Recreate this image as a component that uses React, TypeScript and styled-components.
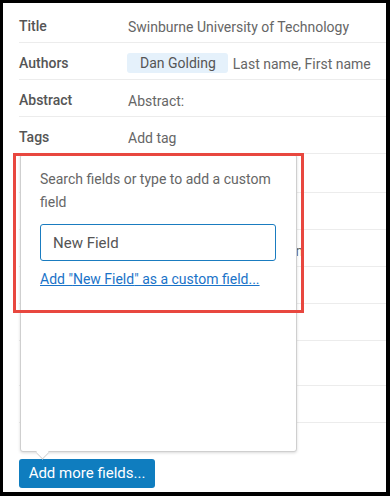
import React, { useState } from "react";
import styled, { createGlobalStyle } from "styled-components";

type Field = {
  label: string;
  value: string;
  chip?: string;
  height?: number;
};

// rows under the popover are left mostly blank, only the edge of one value peeks out
const fields: Field[] = [
  { label: "Title", value: "Swinburne University of Technology" },
  { label: "Authors", value: "Last name, First name", chip: "Dan Golding" },
  { label: "Abstract", value: "Abstract:" },
  { label: "Tags", value: "Add tag" },
  { label: "", value: "", height: 39 },
  { label: "", value: "" },
  { label: "", value: "Faculties of Communication" },
  { label: "", value: "" },
  { label: "", value: "" },
  { label: "", value: "", height: 45 },
  { label: "", value: "" },
];

function App() {
  const [query, setQuery] = useState<string>("New Field");

  return (
    <StFrame>
      <GlobalStyle />
      <StFieldList>
        {fields.map((field, index) => {
          return (
            <StRow key={index} $height={field.height ?? 37}>
              <StLabel>{field.label}</StLabel>
              <StValue>
                {field.chip && <StChip>{field.chip}</StChip>}
                {field.value}
              </StValue>
            </StRow>
          );
        })}
      </StFieldList>
      <StFooter>
        <StPopover>
          <StHint>Search fields or type to add a custom field</StHint>
          <StSearchInput
            value={query}
            onChange={(event) => setQuery(event.target.value)}
          />
          <StCustomLink href="#">Add "{query}" as a custom field...</StCustomLink>
        </StPopover>
        <StAddButton type="button">Add more fields...</StAddButton>
      </StFooter>
      <StHighlight />
    </StFrame>
  );
}

export default App;

const GlobalStyle = createGlobalStyle`
  body {
    margin: 0;
    background: #000;
    font-family: Roboto, "Liberation Sans", sans-serif;
  }
`;

const StFrame = styled.div`
  position: relative;
  box-sizing: border-box;
  width: 390px;
  height: 496px;
  border-style: solid;
  border-color: #000;
  border-width: 3px 4px 4px 3px;
  background: #fff;
  padding: 3px 0 0 16px;
  overflow: hidden;
`;

const StFieldList = styled.div`
  display: flex;
  flex-direction: column;
`;

const StRow = styled.div<{ $height: number }>`
  box-sizing: border-box;
  display: flex;
  align-items: center;
  height: ${(p) => p.$height}px;
  padding-top: 4px;
  border-bottom: 1px solid #ececec;
  font-size: 14px;
`;

const StLabel = styled.div`
  width: 109px;
  flex-shrink: 0;
  color: #555;
  font-weight: 500;
`;

const StValue = styled.div`
  display: flex;
  align-items: center;
  gap: 5px;
  color: #666;
  white-space: nowrap;
  padding-top: 2px;
`;

const StChip = styled.span`
  display: inline-flex;
  align-items: center;
  height: 20px;
  margin-top: -2px;
  margin-left: -1px;
  padding: 0 12px 0 13px;
  border-radius: 3px;
  background: #e5f1fb;
  color: #555;
`;

const StFooter = styled.div`
  position: relative;
  margin-top: 36px;
`;

const StPopover = styled.div`
  position: absolute;
  left: 1px;
  bottom: calc(100% + 7px);
  box-sizing: border-box;
  width: 277px;
  height: 298px;
  padding: 13px 20px 0 19px;
  background: #fff;
  border: 1px solid #cfcfcf;
  border-radius: 3px;
  box-shadow: 0 1px 3px rgba(0, 0, 0, 0.15);
  display: flex;
  flex-direction: column;
  z-index: 2;

  &::after {
    content: "";
    position: absolute;
    left: 15px;
    bottom: -8px;
    width: 12px;
    height: 12px;
    background: #fff;
    border-right: 1px solid #cfcfcf;
    border-bottom: 1px solid #cfcfcf;
    transform: rotate(45deg) scale(0.75, 0.75);
  }
`;

const StHint = styled.p`
  margin: 0;
  font-size: 14px;
  line-height: 23px;
  color: #666;
`;

const StSearchInput = styled.input`
  box-sizing: border-box;
  width: 236px;
  height: 37px;
  margin-top: 10px;
  padding: 0 12px;
  border: 1px solid #1a7cc0;
  border-radius: 3px;
  font-family: Roboto, "Liberation Sans", sans-serif;
  font-size: 15px;
  color: #555;
  outline: none;
`;

const StCustomLink = styled.a`
  margin-top: 9px;
  font-size: 14px;
  line-height: 18px;
  color: #1a73c8;
  text-decoration: underline;
`;

const StAddButton = styled.button`
  display: block;
  box-sizing: border-box;
  width: 136px;
  height: 29px;
  padding: 0 0 1px;
  border: none;
  border-radius: 3px;
  background: #0f7dbf;
  color: #fff;
  font-family: Roboto, "Liberation Sans", sans-serif;
  font-size: 15px;
`;

const StHighlight = styled.div`
  position: absolute;
  left: 10px;
  top: 150px;
  box-sizing: border-box;
  width: 291px;
  height: 160px;
  border: 3px solid #e8473f;
  pointer-events: none;
  z-index: 3;
`;
